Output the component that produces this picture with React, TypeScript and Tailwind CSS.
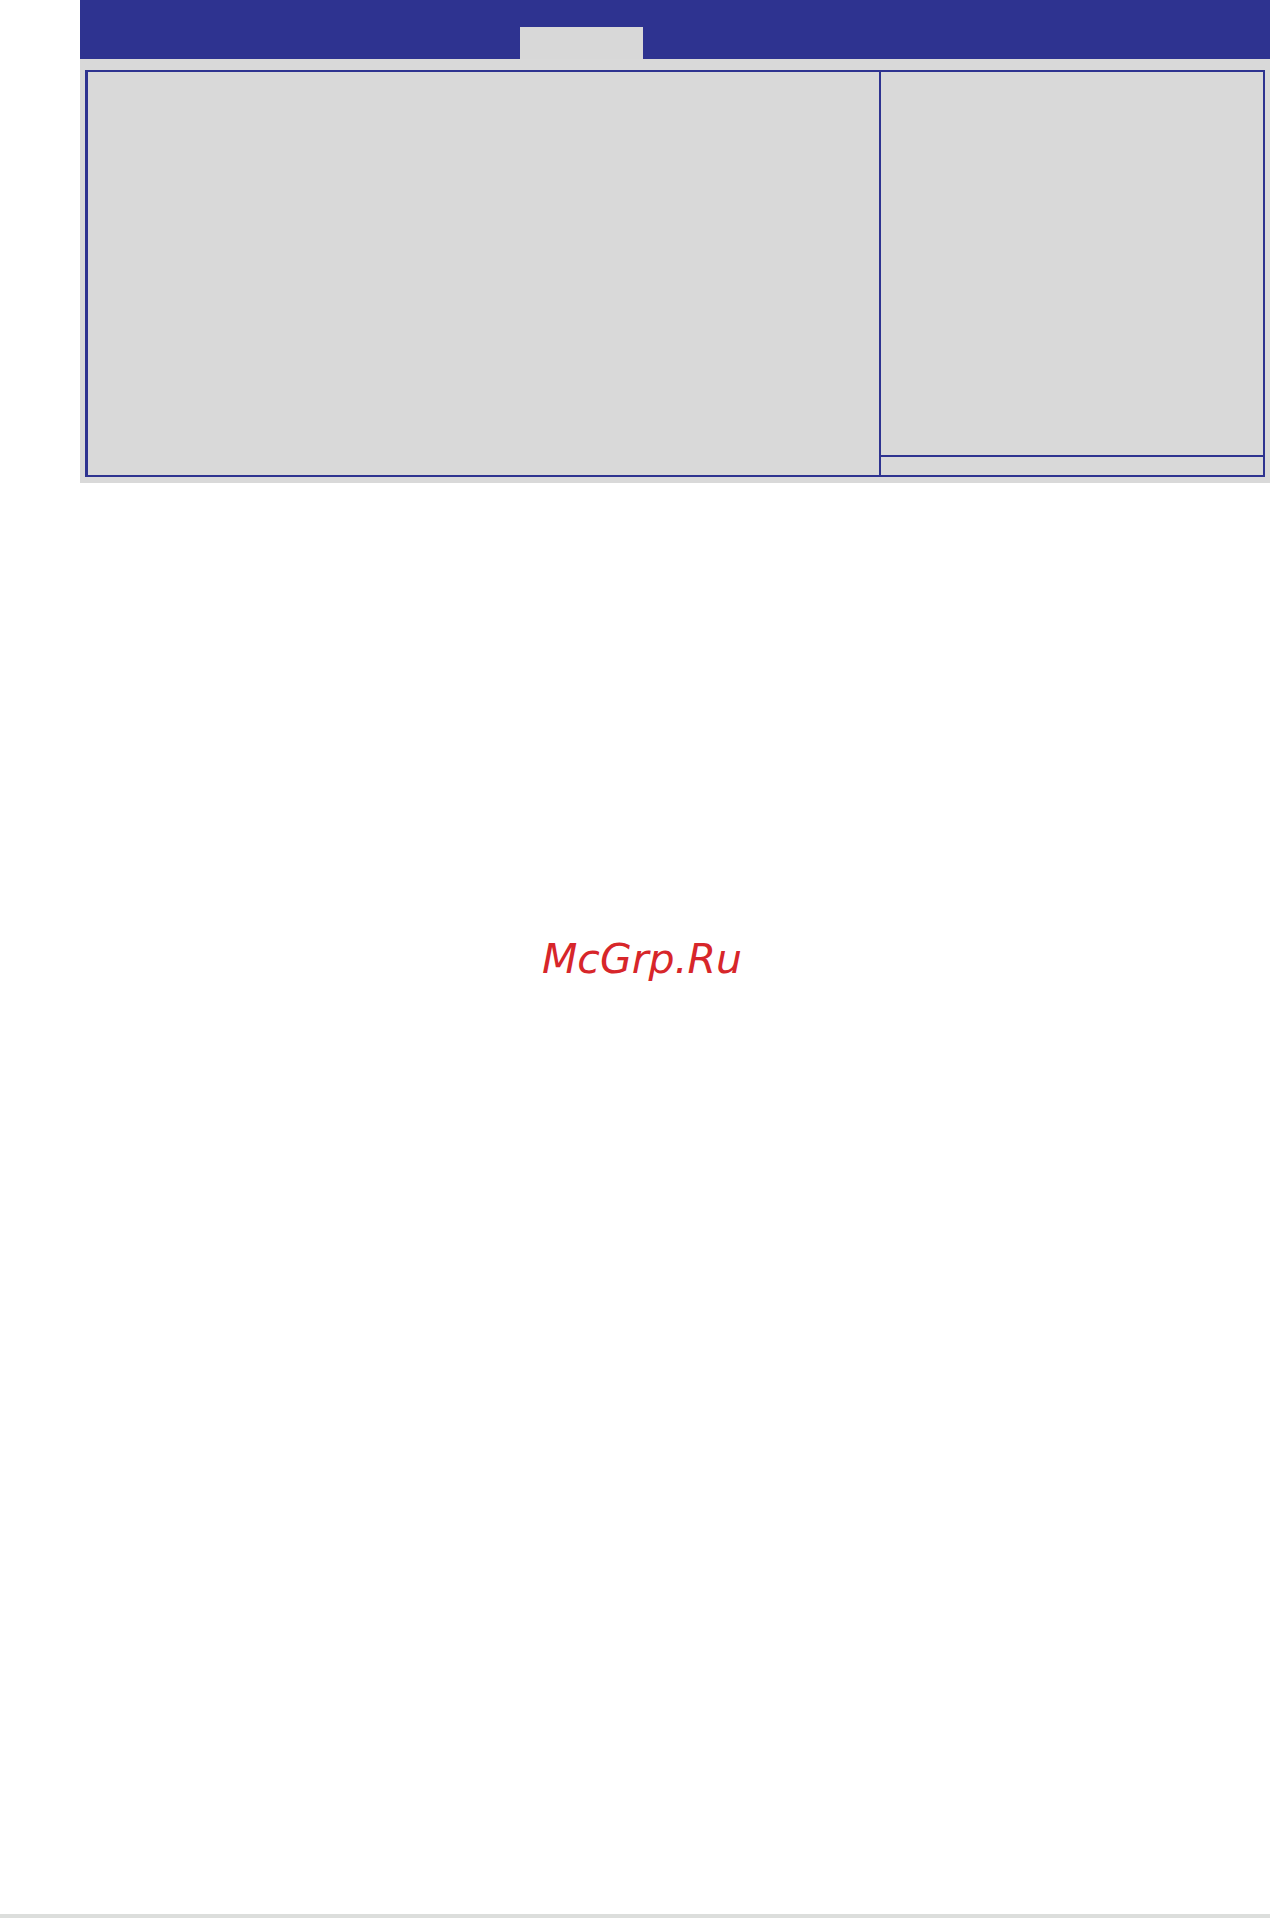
export default function App() {
  return (
    <div className="w-[1270px] h-[1918px] bg-white flex flex-col">
      <div className="ml-[80px] flex flex-col">
        <div className="h-[59px] bg-[#2e3390] flex items-end">
          <div className="w-[440px]" />
          <div className="w-[123px] h-[32px] bg-[#d8d8d8]" />
        </div>
        <div className="h-[424px] bg-[#d9d9d9] pl-[5px] pr-[5px] pt-[11px]">
          <div className="w-[1180px] h-[407px] border-2 border-l-[3px] border-[#2e3390] flex">
            <div className="w-[793px] border-r-2 border-[#2e3390]" />
            <div className="flex-1 flex flex-col">
              <div className="flex-1 border-b-2 border-[#2e3390]" />
              <div className="h-[18px]" />
            </div>
          </div>
        </div>
      </div>
      <div className="mt-[456px] ml-[542px] leading-[40px] text-[41px] italic text-[#d7262a] font-['DejaVu_Sans',sans-serif]">
        McGrp.Ru
      </div>
      <div className="flex-1" />
      <div className="h-[4px] bg-[#dcdedc]" />
    </div>
  );
}
